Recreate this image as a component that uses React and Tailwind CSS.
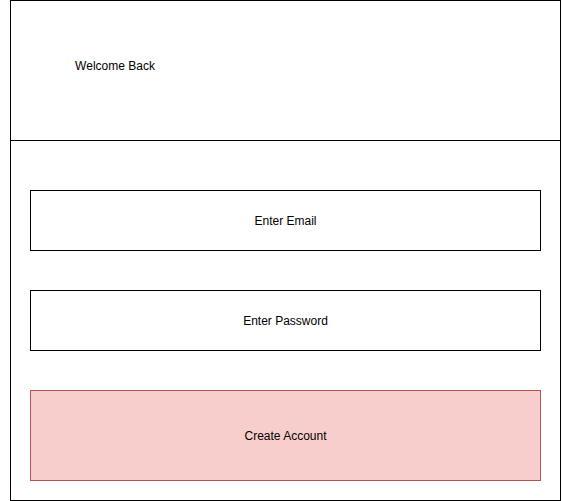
export default function App() {
  const font = { fontFamily: '"Liberation Sans", Arial, Helvetica, sans-serif' };

  return (
    <div className="w-[562px] h-[501px] bg-white" style={font}>
      <div className="ml-[10px] w-[551px] h-[501px] border border-black flex flex-col">
        {/* header */}
        <div className="h-[140px] border-b border-black shrink-0">
          <div className="ml-[44px] mt-[35px] w-[120px] h-[60px] flex items-center justify-center text-[12px] text-black">
            Welcome Back
          </div>
        </div>

        {/* form */}
        <div className="pl-[19px] pt-[49px] flex flex-col gap-[39px]">
          <div className="w-[511px] h-[61px] border border-black flex items-center justify-center text-[12px] text-black">
            Enter Email
          </div>
          <div className="w-[511px] h-[61px] border border-black flex items-center justify-center text-[12px] text-black">
            Enter Password
          </div>
          <div className="w-[511px] h-[91px] border border-[#b85450] bg-[#f8cecc] flex items-center justify-center text-[12px] text-black">
            Create Account
          </div>
        </div>
      </div>
    </div>
  );
}
